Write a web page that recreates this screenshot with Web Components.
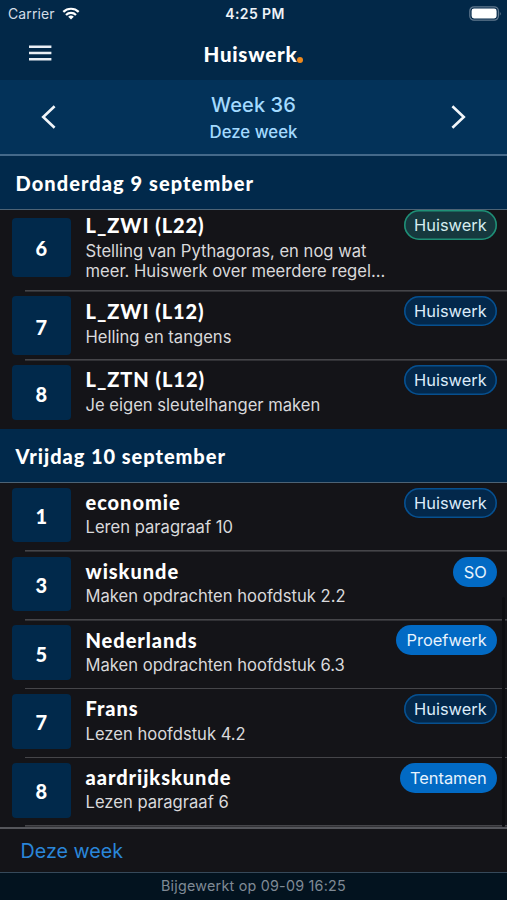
<!DOCTYPE html>
<html lang="nl">
<head>
<meta charset="utf-8">
<title>Huiswerk</title>
<style>
  html, body {
    margin: 0;
    height: 100%;
    background: #141418;
  }

  body {
    overflow: hidden;
    color: #fff;
    font-family: Inter, "Liberation Sans", sans-serif;
    --heading: Lato, "Open Sans", sans-serif;
    --navy: #01294b;
  }
</style>
</head>
<body>
<homework-app></homework-app>

<script>
  class StatusBar extends HTMLElement {
    connectedCallback() {
      this.attachShadow({ mode: 'open' });
      this.shadowRoot.innerHTML = `
        <style>
          :host {
            display: grid;
            grid-template-columns: 1fr auto 1fr;
            align-items: center;
            height: 27px;
            padding: 0 5px 1px 8px;
            font-size: 14px;
          }
          .carrier {
            display: flex;
            align-items: center;
            gap: 7px;
            color: #d3dde7;
            letter-spacing: 0.1px;
          }
          .time {
            font-weight: 600;
            font-size: 14px;
            letter-spacing: 0.4px;
            color: #eef3f8;
          }
          .battery {
            justify-self: end;
          }
          svg {
            display: block;
          }
        </style>
        <div class="carrier">
          <span>Carrier</span>
          <svg width="18" height="13" viewBox="0 0 18 13" fill="none" stroke="#fff" stroke-width="2.2">
            <path d="M1.3 4.9a11 11 0 0 1 15.4 0"/>
            <path d="M4 8a7.1 7.1 0 0 1 10 0"/>
            <path d="M9 12.6 6.2 9.8a4 4 0 0 1 5.6 0z" fill="#fff" stroke="none"/>
          </svg>
        </div>
        <span class="time">4:25 PM</span>
        <svg class="battery" width="33" height="15" viewBox="0 0 33 15">
          <rect x="0.8" y="0.8" width="28.6" height="13.4" rx="4.2" fill="none" stroke="#62798f" stroke-width="1.2"/>
          <rect x="2.6" y="2.6" width="25" height="9.8" rx="2.4" fill="#fff"/>
          <path d="M30.8 5.2q1.8 2.3 0 4.6z" fill="#62798f"/>
        </svg>
      `;
    }
  }

  class AppHeader extends HTMLElement {
    connectedCallback() {
      this.attachShadow({ mode: 'open' });
      this.shadowRoot.innerHTML = `
        <style>
          :host {
            display: grid;
            grid-template-columns: 1fr auto 1fr;
            align-items: center;
            height: 52px;
            padding: 0 28px;
          }
          svg {
            display: block;
            margin-bottom: 3px;
          }
          h1 {
            margin: 0;
            font: 900 20.5px/50px var(--heading);
            letter-spacing: 0.75px;
          }
          .dot {
            display: inline-block;
            width: 6px;
            height: 6px;
            margin-bottom: -1px;
            border-radius: 50%;
            background: #ef8a1d;
          }
        </style>
        <svg width="24" height="18" viewBox="0 0 24 18" stroke="#e9eef4" stroke-width="2.6">
          <path d="M1 2.8h22.4M1 9h22.4M1 15.2h22.4"/>
        </svg>
        <h1><slot></slot><span class="dot"></span></h1>
      `;
    }
  }

  class WeekPicker extends HTMLElement {
    connectedCallback() {
      this.attachShadow({ mode: 'open' });
      this.shadowRoot.innerHTML = `
        <style>
          :host {
            display: flex;
            justify-content: space-between;
            align-items: center;
            box-sizing: border-box;
            height: 76px;
            padding: 0 40px;
            background: #033259;
            border-bottom: 2px solid #44698a;
            text-align: center;
            font-weight: 500;
            color: #a3daff;
          }
          .text {
            padding-top: 3px;
          }
          .week {
            font-size: 20px;
            line-height: 27px;
            letter-spacing: 0.1px;
          }
          .label {
            font-size: 16.8px;
            line-height: 27px;
          }
          svg {
            display: block;
            fill: none;
            stroke: #f2f6fa;
            stroke-width: 2.6;
          }
        </style>
        <svg width="16" height="24" viewBox="0 0 16 24"><path d="M14.6 1.2 3.2 12l11.4 10.8"/></svg>
        <div class="text">
          <div class="week"><slot name="week"></slot></div>
          <div class="label"><slot></slot></div>
        </div>
        <svg width="16" height="24" viewBox="0 0 16 24"><path d="M1.4 1.2 12.8 12 1.4 22.8"/></svg>
      `;
    }
  }

  class DayHeader extends HTMLElement {
    connectedCallback() {
      this.attachShadow({ mode: 'open' });
      this.shadowRoot.innerHTML = `
        <style>
          :host {
            display: block;
            box-sizing: border-box;
            height: 54px;
            padding-left: 15.5px;
            background: var(--navy);
            border-bottom: 1.5px solid #4d6375;
            font: 900 20px/54px var(--heading);
            letter-spacing: 1.06px;
          }
        </style>
        <slot></slot>
      `;
    }
  }

  class TypeBadge extends HTMLElement {
    connectedCallback() {
      this.attachShadow({ mode: 'open' });
      this.shadowRoot.innerHTML = `
        <style>
          :host {
            display: block;
            box-sizing: border-box;
            height: 30px;
            padding: 0 10.3px;
            border-radius: 15px;
            background: #03284b;
            box-shadow: inset 0 0 0 1.6px #07508f;
            color: #dcebf9;
            font-size: 16.4px;
            line-height: 30.5px;
            white-space: nowrap;
          }
          :host([kind="done"]) {
            background: #16383e;
            box-shadow: inset 0 0 0 1.6px #1f9076;
            color: #d5ecee;
          }
          :host([kind="test"]) {
            background: #026ac4;
            box-shadow: none;
            color: #e8f3fd;
          }
        </style>
        <slot></slot>
      `;
    }
  }

  class HomeworkItem extends HTMLElement {
    connectedCallback() {
      this.attachShadow({ mode: 'open' });
      this.shadowRoot.innerHTML = `
        <style>
          :host {
            display: flex;
            align-items: flex-start;
            box-sizing: border-box;
            height: var(--row, 68.8px);
            padding: 4.8px 10px 0 12px;
            /* divider starts halfway into the tile column */
            background: linear-gradient(#454549, #454549) 25px 100% / 100% 1.6px no-repeat;
          }
          :host([last-of-day]) {
            background: none;
          }
          .hour {
            flex: none;
            display: grid;
            place-items: center;
            box-sizing: border-box;
            width: 58.5px;
            height: var(--tile, 54.6px);
            padding-top: 2px;
            border-radius: 4px;
            background: var(--navy);
            font: 900 20px/24px var(--heading);
          }
          .body {
            flex: 1;
            min-width: 0;
            padding-left: 15px;
            margin-top: var(--text-top, 1.2px);
          }
          h2 {
            margin: 0 0 var(--gap, 1.2px);
            font: 900 20px/27px var(--heading);
            letter-spacing: 0.95px;
            white-space: nowrap;
          }
          p {
            margin: 0;
            font-size: 16.6px;
            line-height: 20px;
            color: #d9d9db;
            white-space: pre-line;
          }
          type-badge {
            flex: none;
            margin-top: var(--badge-top, 0px);
          }
        </style>
        <div class="hour">${this.getAttribute('hour')}</div>
        <div class="body">
          <h2>${this.getAttribute('subject')}</h2>
          <p><slot></slot></p>
        </div>
        <type-badge kind="${this.getAttribute('kind') || ''}">${this.getAttribute('type')}</type-badge>
      `;
    }
  }

  class SyncFooter extends HTMLElement {
    connectedCallback() {
      this.attachShadow({ mode: 'open' });
      this.shadowRoot.innerHTML = `
        <style>
          :host {
            display: block;
            flex: none;
            position: relative;
            background: #141418;
          }
          .today {
            box-sizing: border-box;
            height: 45px;
            padding-left: 20.5px;
            border-top: 2.5px solid #55565b;
            font-size: 19.7px;
            line-height: 44px;
            color: #2a86d9;
          }
          .updated {
            box-sizing: border-box;
            height: 28px;
            border-top: 1.5px solid #36495a;
            background: #03131f;
            font-size: 14.3px;
            line-height: 26px;
            letter-spacing: 0.24px;
            text-align: center;
            color: #7f8a95;
          }
        </style>
        <div class="today">Deze week</div>
        <div class="updated">Bijgewerkt op 09-09 16:25</div>
      `;
    }
  }

  class HomeworkApp extends HTMLElement {
    connectedCallback() {
      this.attachShadow({ mode: 'open' });
      this.shadowRoot.innerHTML = `
        <style>
          :host {
            display: flex;
            flex-direction: column;
            width: 507px;
            height: 900px;
            overflow: hidden;
          }
          .top {
            flex: none;
            background: #022848;
          }
          .list {
            flex: 1;
            min-height: 0;
            overflow: hidden;
            position: relative;
          }
          .scrollbar {
            position: absolute;
            right: 2px;
            top: 387px;
            width: 3px;
            bottom: 0;
            border-radius: 2px;
            background: #0e0e11;
          }
        </style>
        <div class="top">
          <status-bar></status-bar>
          <app-header>Huiswerk</app-header>
          <week-picker><span slot="week">Week 36</span>Deze week</week-picker>
          <day-header>Donderdag 9 september</day-header>
        </div>
        <div class="list">
          <homework-item hour="6" subject="L_ZWI (L22)" type="Huiswerk" kind="done"
            style="--row: 81.5px; --tile: 59px; padding-top: 7.5px; --badge-top: -7.5px; --text-top: -5.2px; --gap: 1.2px">Stelling van Pythagoras, en nog wat
meer. Huiswerk over meerdere regel...</homework-item>
          <homework-item hour="7" subject="L_ZWI (L12)" type="Huiswerk"
            style="--row: 69px; --tile: 58.5px; --text-top: 1.7px; --gap: 2px">Helling en tangens</homework-item>
          <homework-item hour="8" subject="L_ZTN (L12)" type="Huiswerk" last-of-day
            style="--row: 68.5px">Je eigen sleutelhanger maken</homework-item>
          <day-header style="letter-spacing: 0.95px">Vrijdag 10 september</day-header>
          <homework-item hour="1" subject="economie" type="Huiswerk">Leren paragraaf 10</homework-item>
          <homework-item hour="3" subject="wiskunde" type="SO" kind="test">Maken opdrachten hoofdstuk 2.2</homework-item>
          <homework-item hour="5" subject="Nederlands" type="Proefwerk" kind="test">Maken opdrachten hoofdstuk 6.3</homework-item>
          <homework-item hour="7" subject="Frans" type="Huiswerk">Lezen hoofdstuk 4.2</homework-item>
          <homework-item hour="8" subject="aardrijkskunde" type="Tentamen" kind="test">Lezen paragraaf 6</homework-item>
          <div class="scrollbar"></div>
        </div>
        <sync-footer></sync-footer>
      `;
    }
  }

  customElements.define('status-bar', StatusBar);
  customElements.define('app-header', AppHeader);
  customElements.define('week-picker', WeekPicker);
  customElements.define('day-header', DayHeader);
  customElements.define('type-badge', TypeBadge);
  customElements.define('homework-item', HomeworkItem);
  customElements.define('sync-footer', SyncFooter);
  customElements.define('homework-app', HomeworkApp);
</script>
</body>
</html>
